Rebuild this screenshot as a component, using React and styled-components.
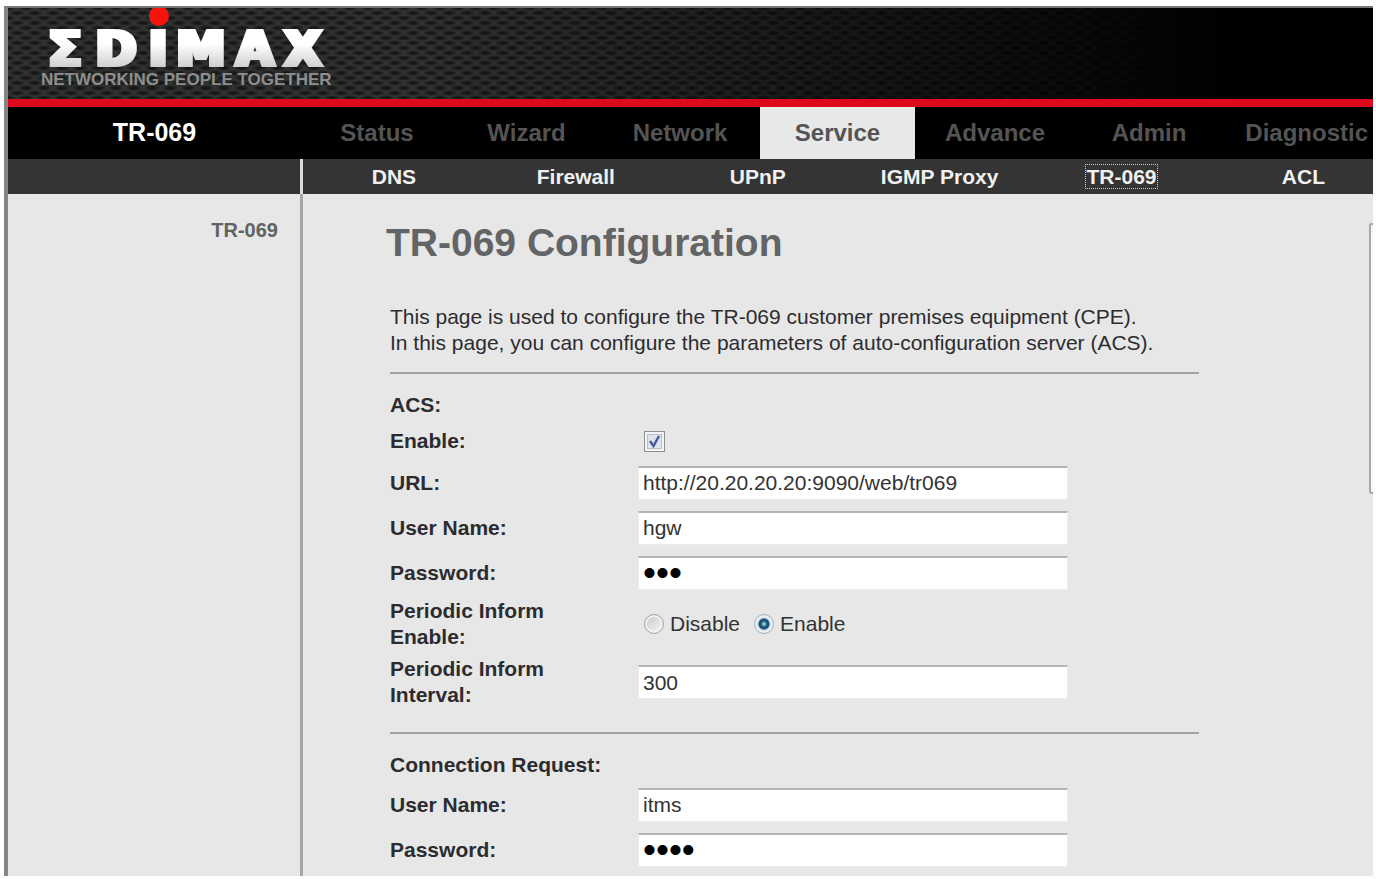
import React, { useState } from "react";
import styled, { createGlobalStyle, css } from "styled-components";

const mainMenu = [
  { name: "Status", width: 152 },
  { name: "Wizard", width: 147 },
  { name: "Network", width: 160 },
  { name: "Service", width: 155 },
  { name: "Advance", width: 160 },
  { name: "Admin", width: 148 },
  { name: "Diagnostic", width: 145 },
];

const subMenu = ["DNS", "Firewall", "UPnP", "IGMP Proxy", "TR-069", "ACL"];

const Logo = () => (
  <StLogo viewBox="0 0 300 60" role="img" aria-label="EDIMAX">
    <defs>
      <linearGradient id="silver" x1="0" y1="0" x2="0" y2="1">
        <stop offset="0.4" stopColor="#ffffff" />
        <stop offset="0.8" stopColor="#d0d0d0" />
      </linearGradient>
      <filter id="heavy">
        <feMorphology operator="dilate" radius="2 0" />
      </filter>
    </defs>
    <text
      x="24 75 117 160 214 262"
      y="58"
      textAnchor="middle"
      fill="url(#silver)"
      stroke="url(#silver)"
      strokeWidth="2"
      filter="url(#heavy)"
    >
      ΣDIMAX
    </text>
    <circle cx="118" cy="8" r="10" fill="#f5130f" />
  </StLogo>
);

const App = () => {
  const [form, setForm] = useState({
    acsEnable: true,
    url: "http://20.20.20.20:9090/web/tr069",
    userName: "hgw",
    password: "abc",
    inform: "enable",
    interval: "300",
    requestUser: "itms",
    requestPassword: "itms",
  });

  const onChangeHandler = (e) => {
    const { name, value, type, checked } = e.target;
    setForm({ ...form, [name]: type === "checkbox" ? checked : value });
  };

  return (
    <StFrame>
      <GlobalStyle />
      <StBanner>
        <Logo />
        <StSlogan>NETWORKING PEOPLE TOGETHER</StSlogan>
      </StBanner>

      <StNav>
        <StNavTitle>TR-069</StNavTitle>
        {mainMenu.map((menu) => (
          <StNavLink
            href="#"
            key={menu.name}
            $width={menu.width}
            $active={menu.name === "Service"}
          >
            {menu.name}
          </StNavLink>
        ))}
      </StNav>

      <StSubNav>
        <StSubSpace />
        <StSubLinks>
          {subMenu.map((name) => (
            <StSubItem key={name}>
              <StSubLink href="#" $focused={name === "TR-069"}>
                {name}
              </StSubLink>
            </StSubItem>
          ))}
        </StSubLinks>
      </StSubNav>

      <StBody>
        <StSide>
          <StSideLink href="#">TR-069</StSideLink>
        </StSide>
        <StContent>
          <StTitle>TR-069 Configuration</StTitle>
          <StForm>
            <StIntro>
              This page is used to configure the TR-069 customer premises
              equipment (CPE).
              <br />
              In this page, you can configure the parameters of
              auto-configuration server (ACS).
            </StIntro>

            <StSection>
              <StLegend>ACS:</StLegend>
              <StRow $height={38}>
                <StLabel htmlFor="acsEnable">Enable:</StLabel>
                <StCheck
                  id="acsEnable"
                  name="acsEnable"
                  type="checkbox"
                  checked={form.acsEnable}
                  onChange={onChangeHandler}
                />
              </StRow>
              <StRow>
                <StLabel htmlFor="url">URL:</StLabel>
                <StInput
                  id="url"
                  name="url"
                  value={form.url}
                  onChange={onChangeHandler}
                />
              </StRow>
              <StRow>
                <StLabel htmlFor="userName">User Name:</StLabel>
                <StInput
                  id="userName"
                  name="userName"
                  value={form.userName}
                  onChange={onChangeHandler}
                />
              </StRow>
              <StRow>
                <StLabel htmlFor="password">Password:</StLabel>
                <StInput
                  id="password"
                  name="password"
                  type="password"
                  value={form.password}
                  onChange={onChangeHandler}
                />
              </StRow>
              <StRow $height={58} role="radiogroup" aria-labelledby="inform">
                <StLabel as="span" id="inform">
                  Periodic Inform Enable:
                </StLabel>
                <StRadios>
                  <StRadio
                    id="informOff"
                    name="inform"
                    type="radio"
                    value="disable"
                    checked={form.inform === "disable"}
                    onChange={onChangeHandler}
                  />
                  <label htmlFor="informOff">Disable</label>
                  <StRadio
                    id="informOn"
                    name="inform"
                    type="radio"
                    value="enable"
                    checked={form.inform === "enable"}
                    onChange={onChangeHandler}
                  />
                  <label htmlFor="informOn">Enable</label>
                </StRadios>
              </StRow>
              <StRow $height={58}>
                <StLabel htmlFor="interval">Periodic Inform Interval:</StLabel>
                <StInput
                  id="interval"
                  name="interval"
                  value={form.interval}
                  onChange={onChangeHandler}
                />
              </StRow>
            </StSection>

            <StSection>
              <StLegend>Connection Request:</StLegend>
              <StRow>
                <StLabel htmlFor="requestUser">User Name:</StLabel>
                <StInput
                  id="requestUser"
                  name="requestUser"
                  value={form.requestUser}
                  onChange={onChangeHandler}
                />
              </StRow>
              <StRow>
                <StLabel htmlFor="requestPassword">Password:</StLabel>
                <StInput
                  id="requestPassword"
                  name="requestPassword"
                  type="password"
                  value={form.requestPassword}
                  onChange={onChangeHandler}
                />
              </StRow>
            </StSection>
          </StForm>
        </StContent>
        <StScroll>
          <StThumb />
        </StScroll>
      </StBody>
    </StFrame>
  );
};

export default App;

const GlobalStyle = createGlobalStyle`
  * {
    box-sizing: border-box;
  }
  body {
    margin: 0;
    background-color: #fdfdfd;
    font-family: "Liberation Sans", Arial, sans-serif;
    font-size: 21px;
    color: #2c2c30;
  }
  a {
    text-decoration: none;
  }
`;

const StFrame = styled.div`
  display: flex;
  flex-direction: column;
  margin: 6px 3px 2px 4px;
  border-top: 2px solid #777;
  border-left: 4px solid #858585;
  overflow: hidden;
`;

// carbon weave that fades to black on the right
const StBanner = styled.header`
  display: flex;
  flex-direction: column;
  height: 99px;
  padding-left: 33px;
  border-bottom: 8px solid #dc0a1c;
  background-color: #303131;
  background-image: linear-gradient(90deg, transparent 30%, #000 90%),
    radial-gradient(ellipse 8px 3px, #161717 30%, transparent),
    radial-gradient(ellipse 8px 3px, #161717 30%, transparent);
  background-size: auto, 18px 10px, 18px 10px;
  background-position: 0 0, 0 0, 9px 5px;
`;

const StLogo = styled.svg`
  width: 300px;
  height: 60px;
  flex-shrink: 0;
  overflow: visible;
  font-family: "DejaVu Sans", sans-serif;
  font-size: 49px;
  font-weight: 700;
`;

const StSlogan = styled.p`
  margin: 0;
  padding-top: 2px;
  font-size: 17px;
  font-weight: 700;
  line-height: 20px;
  color: #8e8e8e;
`;

const StNav = styled.nav`
  display: flex;
  height: 52px;
  background-color: #000;
`;

const StNavTitle = styled.span`
  width: 293px;
  flex-shrink: 0;
  font-size: 25px;
  font-weight: 700;
  line-height: 50px;
  text-align: center;
  color: #fff;
`;

const StNavLink = styled.a`
  flex: ${(props) => props.$width} 0 0;
  font-size: 24px;
  font-weight: 700;
  line-height: 52px;
  text-align: center;
  color: #545454;
  ${(props) =>
    props.$active &&
    css`
      background-color: #e7e9e8;
    `}

  &:last-child {
    padding-right: 5px;
    text-align: right;
  }
`;

const StSubNav = styled.nav`
  display: flex;
  height: 35px;
  background-color: #343434;
`;

const StSubSpace = styled.div`
  width: 295px;
  flex-shrink: 0;
  border-right: 3px solid #dcdcdc;
`;

const StSubLinks = styled.div`
  display: grid;
  grid-template-columns: repeat(6, 17%);
  flex: 1;
`;

const StSubItem = styled.div`
  text-align: center;
  line-height: 36px;
`;

const StSubLink = styled.a`
  font-weight: 700;
  color: #f0f0f0;
  outline: ${(props) => (props.$focused ? "1px dotted #ccc" : "none")};
`;

const StBody = styled.div`
  display: flex;
  background-color: #e7e7e7;
`;

const StSide = styled.aside`
  width: 295px;
  flex-shrink: 0;
  padding: 24px 22px;
  border-right: 3px solid #a6a6a6;
  text-align: right;
`;

const StSideLink = styled.a`
  font-size: 20px;
  font-weight: 700;
  color: #626262;
`;

const StContent = styled.main`
  flex: 1;
  padding: 26px 0 4px 83px;
`;

const StTitle = styled.h1`
  margin: 0;
  font-size: 39px;
  line-height: 46px;
  color: #626466;
`;

const StForm = styled.div`
  padding-left: 4px;
`;

const StIntro = styled.p`
  margin: 38px 0 16px;
  line-height: 26px;
`;

const StSection = styled.section`
  max-width: 809px;
  padding-top: 18px;
  margin-bottom: 21px;
  border-top: 2px solid #a3a3a3;

  &:last-child {
    margin-bottom: 0;
  }
`;

const StLegend = styled.h2`
  margin: 0 0 4px;
  font-size: 21px;
  line-height: 26px;
`;

const StRow = styled.div`
  display: flex;
  align-items: center;
  height: ${(props) => props.$height || 45}px;
`;

const StLabel = styled.label`
  width: 248px;
  padding-right: 60px;
  flex-shrink: 0;
  font-weight: 700;
  line-height: 26px;
`;

const StInput = styled.input`
  width: 430px;
  height: 34px;
  padding: 0 4px;
  border: 1px solid #ececec;
  border-top: 2px solid #b4b4b4;
  background-color: #fff;
  font-family: inherit;
  font-size: 21px;
  color: #333;

  &[type="password"] {
    font-size: 37px;
    color: #000;
  }
`;

const StCheck = styled.input`
  appearance: none;
  width: 21px;
  height: 21px;
  margin: 0 6px;
  border: 1px solid #8e8f8f;
  box-shadow: inset 0 0 0 2px #f4f4f4, inset 0 0 0 3px #b8bfc8;
  background: #dfe4ee;

  &:checked {
    background: #dfe4ee
      url("data:image/svg+xml,%3Csvg xmlns='http://www.w3.org/2000/svg' viewBox='0 0 19 19'%3E%3Cpath d='M5 9l3.500 5L14 4' fill='none' stroke='%234a5a9c' stroke-width='2.500'/%3E%3C/svg%3E");
  }
`;

const StRadios = styled.div`
  display: flex;
  align-items: center;
  color: #333;

  label {
    margin-right: 8px;
  }
`;

const StRadio = styled.input`
  appearance: none;
  width: 20px;
  height: 20px;
  margin: 0 6px;
  border: 1px solid #a2a4a6;
  border-radius: 50%;
  box-shadow: inset 0 0 0 2px #f2f2f2;
  background: linear-gradient(135deg, #c4c4c4, #fafafa);

  &:checked {
    border-color: #9db4c4;
    background: radial-gradient(
      circle at 50% 50%,
      #7fd0f0 0 1px,
      #1d5273 3px 5px,
      #c4dcea 6px
    );
  }
`;

const StScroll = styled.div`
  width: 4px;
  padding-top: 29px;
`;

const StThumb = styled.div`
  height: 271px;
  border: 2px solid #a8a8a8;
  border-right: 0;
  border-radius: 3px 0 0 3px;
  background-color: #f5f5f5;
`;
